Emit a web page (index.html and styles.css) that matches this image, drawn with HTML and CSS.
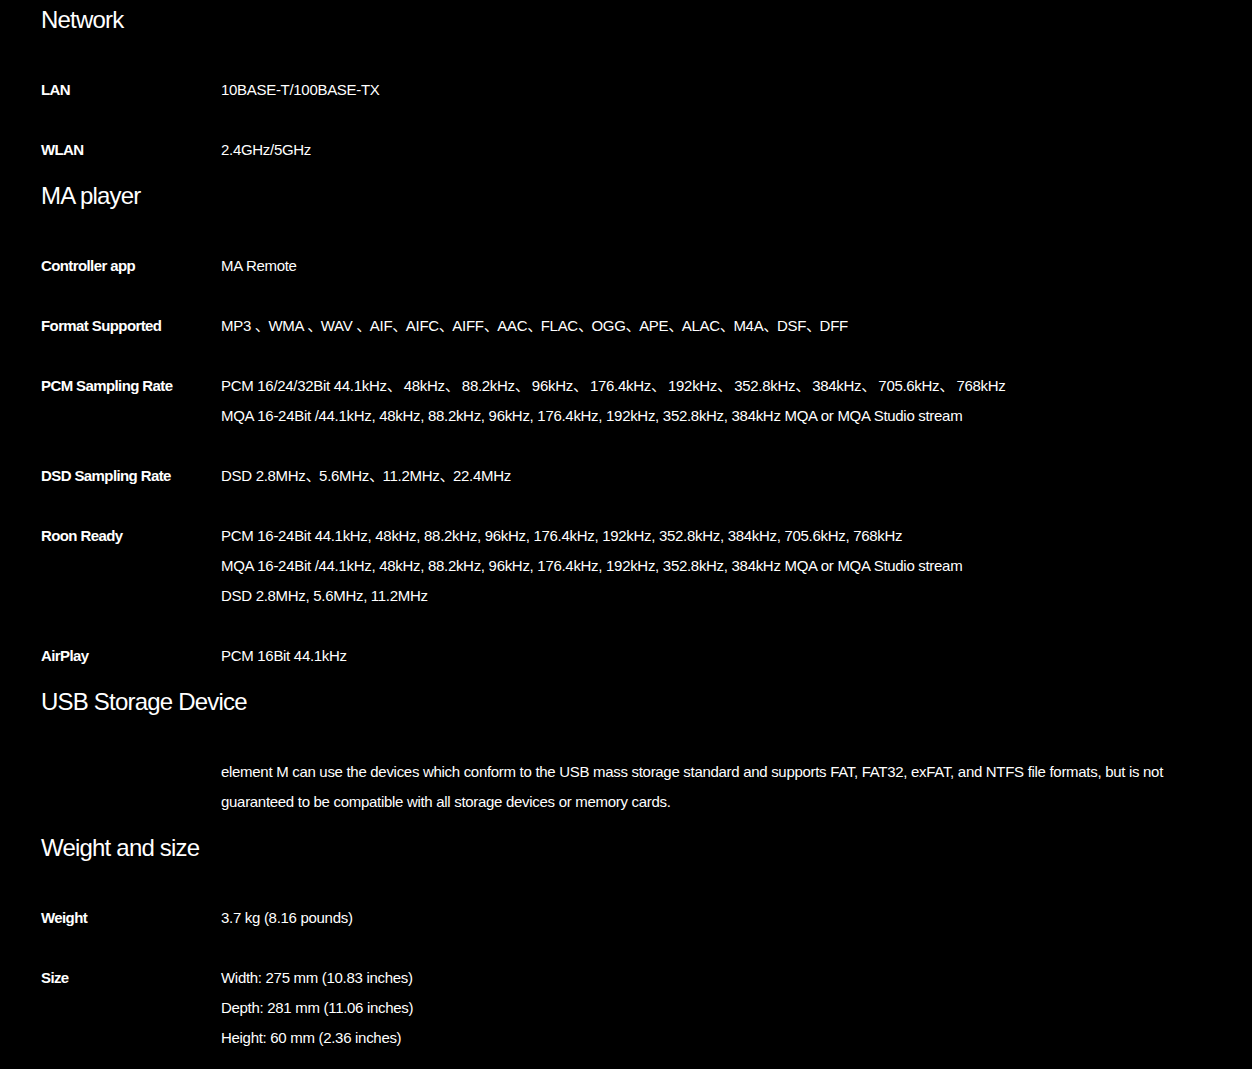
FILE: index.html
```html
<!DOCTYPE html>
<html lang="en">
<head>
<meta charset="utf-8">
<title>Specifications</title>
<link rel="stylesheet" href="styles.css">
</head>
<body>
<main class="specs">
  <section class="sec">
    <h2 class="sec-title">Network</h2>
    <div class="row"><div class="label">LAN</div><div class="value"><p>10BASE-T/100BASE-TX</p></div></div>
    <div class="row"><div class="label">WLAN</div><div class="value"><p>2.4GHz/5GHz</p></div></div>
  </section>
  <section class="sec">
    <h2 class="sec-title">MA player</h2>
    <div class="row"><div class="label">Controller app</div><div class="value"><p>MA Remote</p></div></div>
    <div class="row"><div class="label">Format Supported</div><div class="value"><p>MP3 <span class="sep">、</span> WMA <span class="sep">、</span> WAV <span class="sep">、</span> AIF<span class="sep">、</span> AIFC<span class="sep">、</span> AIFF<span class="sep">、</span> AAC<span class="sep">、</span> FLAC<span class="sep">、</span> OGG<span class="sep">、</span> APE<span class="sep">、</span> ALAC<span class="sep">、</span> M4A<span class="sep">、</span> DSF<span class="sep">、</span> DFF</p></div></div>
    <div class="row"><div class="label">PCM Sampling Rate</div><div class="value"><p class="loose">PCM 16/24/32Bit 44.1kHz<span class="sep">、</span> 48kHz<span class="sep">、</span> 88.2kHz<span class="sep">、</span> 96kHz<span class="sep">、</span> 176.4kHz<span class="sep">、</span> 192kHz<span class="sep">、</span> 352.8kHz<span class="sep">、</span> 384kHz<span class="sep">、</span> 705.6kHz<span class="sep">、</span> 768kHz</p><p>MQA 16-24Bit /44.1kHz, 48kHz, 88.2kHz, 96kHz, 176.4kHz, 192kHz, 352.8kHz, 384kHz MQA or MQA Studio stream</p></div></div>
    <div class="row"><div class="label">DSD Sampling Rate</div><div class="value"><p>DSD 2.8MHz<span class="sep">、</span> 5.6MHz<span class="sep">、</span> 11.2MHz<span class="sep">、</span> 22.4MHz</p></div></div>
    <div class="row"><div class="label">Roon Ready</div><div class="value"><p>PCM 16-24Bit 44.1kHz, 48kHz, 88.2kHz, 96kHz, 176.4kHz, 192kHz, 352.8kHz, 384kHz, 705.6kHz, 768kHz</p><p>MQA 16-24Bit /44.1kHz, 48kHz, 88.2kHz, 96kHz, 176.4kHz, 192kHz, 352.8kHz, 384kHz MQA or MQA Studio stream</p><p>DSD 2.8MHz, 5.6MHz, 11.2MHz</p></div></div>
    <div class="row"><div class="label">AirPlay</div><div class="value"><p>PCM 16Bit 44.1kHz</p></div></div>
  </section>
  <section class="sec">
    <h2 class="sec-title">USB Storage Device</h2>
    <div class="row"><div class="label"></div><div class="value"><p>element M can use the devices which conform to the USB mass storage standard and supports FAT, FAT32, exFAT, and NTFS file formats, but is not guaranteed to be compatible with all storage devices or memory cards.</p></div></div>
  </section>
  <section class="sec">
    <h2 class="sec-title">Weight and size</h2>
    <div class="row"><div class="label">Weight</div><div class="value"><p>3.7 kg (8.16 pounds)</p></div></div>
    <div class="row"><div class="label">Size</div><div class="value"><p>Width: 275 mm (10.83 inches)</p><p>Depth: 281 mm (11.06 inches)</p><p>Height: 60 mm (2.36 inches)</p></div></div>
  </section>
</main>
</body>
</html>
```

FILE: styles.css
```css
html, body {
  margin: 0;
  padding: 0;
  background: #000;
}
body {
  color: #fff;
  font-family: "Liberation Sans", "Noto Sans CJK SC", sans-serif;
}
.specs {
  padding: 0 42px 0 41px;
}
.sec-title {
  margin: 11.5px 0 34.5px;
  font-size: 24px;
  line-height: 40px;
  font-weight: 400;
  letter-spacing: -0.8px;
}
.sec:first-child .sec-title {
  margin-top: 0;
}
.row {
  display: flex;
  margin-bottom: 30px;
}
.row:last-child {
  margin-bottom: 0;
}
.label {
  flex: 0 0 180px;
  font-size: 15px;
  line-height: 30px;
  font-weight: 700;
  letter-spacing: -0.6px;
}
.value {
  flex: 1;
  font-size: 15px;
  line-height: 30px;
  letter-spacing: -0.3px;
}
.value p {
  margin: 0;
}
.sep {
  letter-spacing: -5.3px;
}
.loose .sep {
  letter-spacing: -1.8px;
}
```
